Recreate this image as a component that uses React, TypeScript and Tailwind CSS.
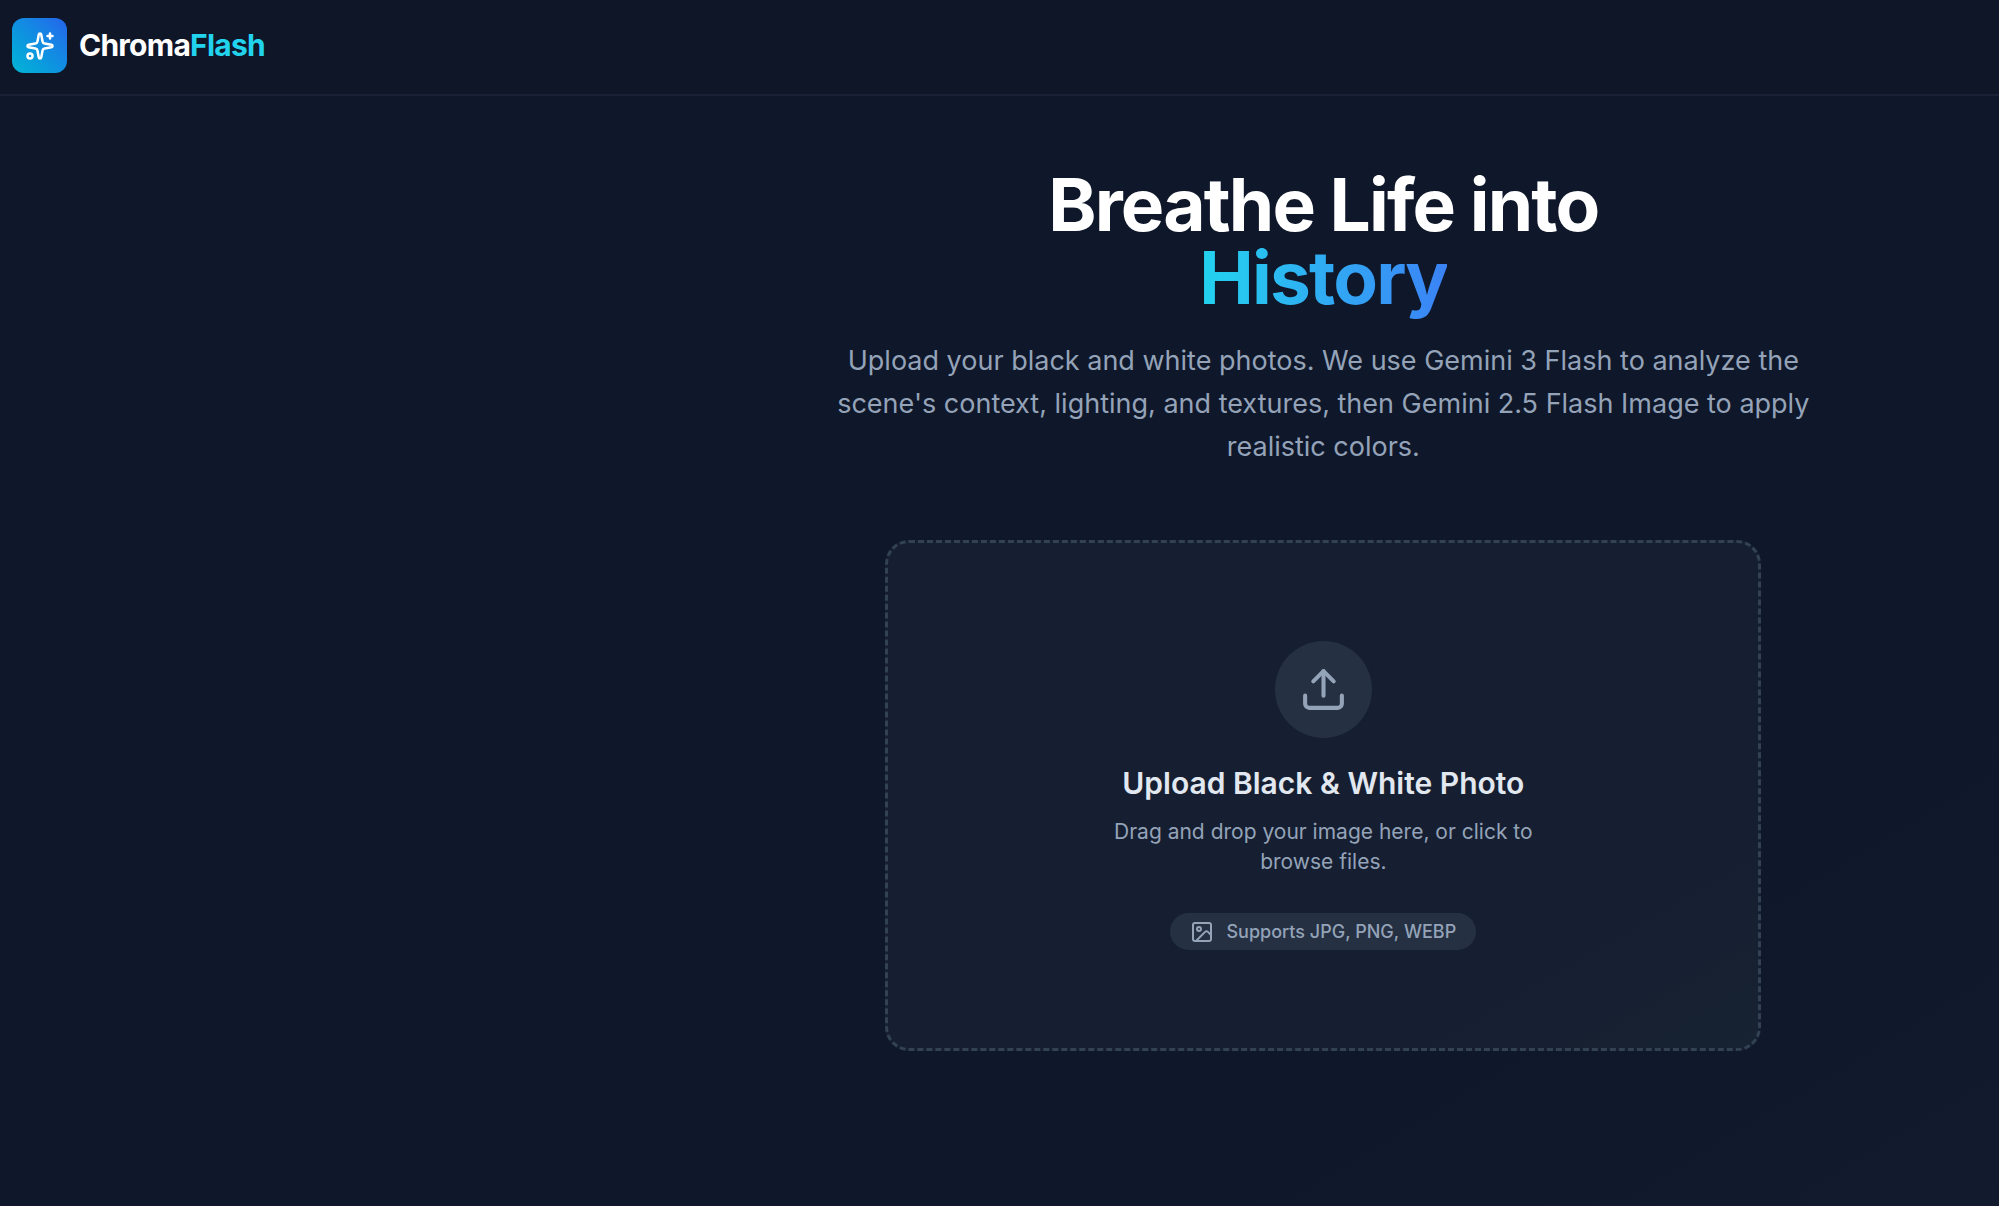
import { useState } from 'react';
import type { ChangeEvent, DragEvent } from 'react';
import { Image as ImageIcon, Sparkles, Upload } from 'lucide-react';
import clsx from 'clsx';

function Header() {
    return (
        <header className="border-b-2 border-[#182135] bg-[#0e1628]">
            <div className="flex items-center gap-3 px-3 pt-[18px] pb-[21px]">
                <div className="flex size-[55px] items-center justify-center rounded-xl bg-linear-to-tr from-[#06b6d4] to-[#2563eb]">
                    <Sparkles className="size-[30px] text-white" />
                </div>
                <span className="text-[30px] leading-[43px] font-bold tracking-tight text-white">
                    Chroma<span className="text-[#22d3ee]">Flash</span>
                </span>
            </div>
        </header>
    );
}

function Hero() {
    return (
        <section className="w-full max-w-[1024px] text-center">
            <h1 className="text-[73px] leading-[73px] font-bold tracking-tight text-white">
                Breathe Life into <br />
                <span className="bg-linear-to-r from-[#22d3ee] to-[#3b82f6] bg-clip-text text-transparent">
                    History
                </span>
            </h1>
            <p className="mt-[25px] text-[27px] leading-[43px] text-[#94a3b8]">
                Upload your black and white photos. We use Gemini 3 Flash to analyze the scene's context,
                lighting, and textures, then Gemini 2.5 Flash Image to apply realistic colors.
            </p>
        </section>
    );
}

interface UploadZoneProps {
    onFileSelect: (file: File) => void;
}

function UploadZone({ onFileSelect }: UploadZoneProps) {
    const [isDragging, setIsDragging] = useState(false);

    const handleDrop = (e: DragEvent<HTMLLabelElement>) => {
        e.preventDefault();
        setIsDragging(false);
        const file = e.dataTransfer.files[0];
        if (file) onFileSelect(file);
    };

    const handleChange = (e: ChangeEvent<HTMLInputElement>) => {
        const file = e.target.files?.[0];
        if (file) onFileSelect(file);
    };

    return (
        <label
            htmlFor="photo"
            onDragOver={(e) => {
                e.preventDefault();
                setIsDragging(true);
            }}
            onDragLeave={() => setIsDragging(false)}
            onDrop={handleDrop}
            className={clsx(
                'flex w-full max-w-[876px] cursor-pointer flex-col items-center rounded-3xl border-3 border-dashed px-6 py-[98px] text-center',
                isDragging
                    ? 'border-[#22d3ee] bg-[#22d3ee]/10'
                    : 'border-[#334155] bg-linear-to-br from-[#161f31] from-80% to-[#172232]'
            )}
        >
            <input id="photo" type="file" accept="image/*" onChange={handleChange} className="sr-only" />

            <span className="flex size-[97px] items-center justify-center rounded-full bg-[#334155]/50">
                <Upload className="size-[49px] text-[#94a3b8]" />
            </span>
            <span className="mt-6 text-[30px] leading-[43px] font-semibold text-[#e2e8f0]">
                Upload Black &amp; White Photo
            </span>
            <span className="mt-3 max-w-[486px] text-[21px] leading-[30px] text-[#94a3b8]">
                Drag and drop your image here, or click to browse files.
            </span>

            {/* Supported formats */}
            <span className="mt-9 flex items-center gap-3 rounded-full bg-[#334155]/50 px-5 py-[6px] text-[18px] leading-[25px] font-medium text-[#94a3b8]">
                <ImageIcon className="size-6" />
                Supports JPG, PNG, WEBP
            </span>
        </label>
    );
}

export default function App() {
    const [, setPhoto] = useState<File | null>(null);

    return (
        <div className="flex min-h-screen flex-col border-b border-white bg-linear-to-br from-[#0f172a] from-80% to-[#121b2d] font-['Inter',sans-serif]">
            <Header />
            <main className="flex flex-col items-center gap-[72px] pt-[72px] pl-[32.4%]">
                <Hero />
                <UploadZone onFileSelect={setPhoto} />
            </main>
        </div>
    );
}
